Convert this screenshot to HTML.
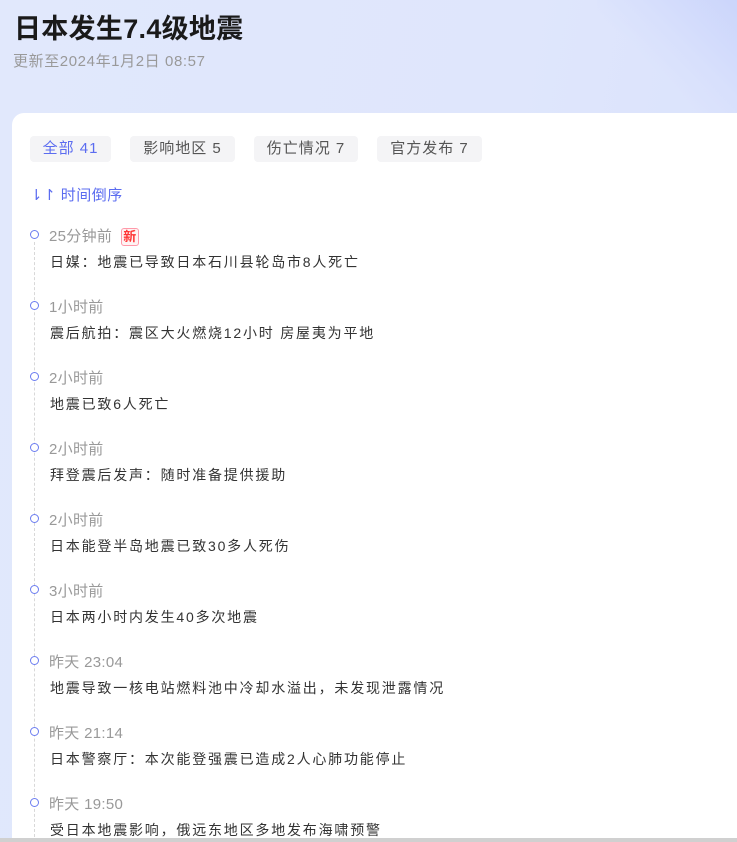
<!DOCTYPE html>
<html><head><meta charset="utf-8"><style>
*{margin:0;padding:0;box-sizing:border-box}
html,body{width:737px;height:842px;overflow:hidden}
body{position:relative;font-family:"Liberation Sans","Noto Sans CJK SC",sans-serif;background:linear-gradient(100deg,#e1e8fc 0%,#dfe6fc 60%,#d9e1fc 100%)}
.corner{position:absolute;right:0;top:0;width:140px;height:113px;background:linear-gradient(225deg,#cbd5fb 0%,#d8e0fc 40%,rgba(223,230,252,0) 60%)}
h1{position:absolute;left:14px;top:7px;font-size:27px;font-weight:bold;color:#1a1a1a;letter-spacing:0.3px}
.sub{position:absolute;left:13px;top:50px;font-size:15px;color:#999;letter-spacing:0.6px}
.card{position:absolute;left:12px;top:113px;width:740px;height:740px;background:#fff;border-radius:12px 0 0 0}
.tab{position:absolute;top:136px;height:26px;line-height:26px;background:#f4f4f6;border-radius:4px;font-size:15px;color:#555;text-align:center;letter-spacing:1px}
.sort{position:absolute;left:30px;top:184px;font-size:15px;color:#5b6cf0;letter-spacing:0.5px}
.line{position:absolute;left:34px;top:242px;height:600px;border-left:1px dashed #d8d8d8}
.dot{position:absolute;left:30px;width:9px;height:9px;border:1.5px solid #6b7cf0;border-radius:50%;background:#fff}
.t{position:absolute;left:49px;font-size:15px;color:#999;letter-spacing:0.3px}
.c{position:absolute;left:50px;font-size:14px;color:#333;letter-spacing:1.8px}
.new{display:inline-block;margin-left:9px;font-size:13px;color:#f33;border:1px solid #f9a;border-radius:3px;padding:0 1px;line-height:16px;background:#fff3f3;font-weight:bold}
.bot{position:absolute;left:0;top:838px;width:737px;height:4px;background:#d0d0d0}
</style></head><body>
<div class="corner"></div>
<h1>日本发生7.4级地震</h1>
<div class="sub">更新至2024年1月2日 08:57</div>
<div class="card"></div>
<div class="tab" style="left:30px;width:81px;color:#5b6cf0">全部 41</div>
<div class="tab" style="left:130px;width:105px">影响地区 5</div>
<div class="tab" style="left:254px;width:104px">伤亡情况 7</div>
<div class="tab" style="left:377px;width:105px">官方发布 7</div>
<div class="sort">⇂↾ 时间倒序</div>
<div class="line"></div>

<div class="dot" style="top:230px"></div><div class="t" style="top:225px">25分钟前<span class="new">新</span></div><div class="c" style="top:252px">日媒：地震已导致日本石川县轮岛市8人死亡</div>
<div class="dot" style="top:301px"></div><div class="t" style="top:296px">1小时前</div><div class="c" style="top:323px">震后航拍：震区大火燃烧12小时 房屋夷为平地</div>
<div class="dot" style="top:372px"></div><div class="t" style="top:367px">2小时前</div><div class="c" style="top:394px">地震已致6人死亡</div>
<div class="dot" style="top:443px"></div><div class="t" style="top:438px">2小时前</div><div class="c" style="top:465px">拜登震后发声：随时准备提供援助</div>
<div class="dot" style="top:514px"></div><div class="t" style="top:509px">2小时前</div><div class="c" style="top:536px">日本能登半岛地震已致30多人死伤</div>
<div class="dot" style="top:585px"></div><div class="t" style="top:580px">3小时前</div><div class="c" style="top:607px">日本两小时内发生40多次地震</div>
<div class="dot" style="top:656px"></div><div class="t" style="top:651px">昨天 23:04</div><div class="c" style="top:678px">地震导致一核电站燃料池中冷却水溢出，未发现泄露情况</div>
<div class="dot" style="top:727px"></div><div class="t" style="top:722px">昨天 21:14</div><div class="c" style="top:749px">日本警察厅：本次能登强震已造成2人心肺功能停止</div>
<div class="dot" style="top:798px"></div><div class="t" style="top:793px">昨天 19:50</div><div class="c" style="top:820px">受日本地震影响，俄远东地区多地发布海啸预警</div>
<div class="bot"></div>
</body></html>
